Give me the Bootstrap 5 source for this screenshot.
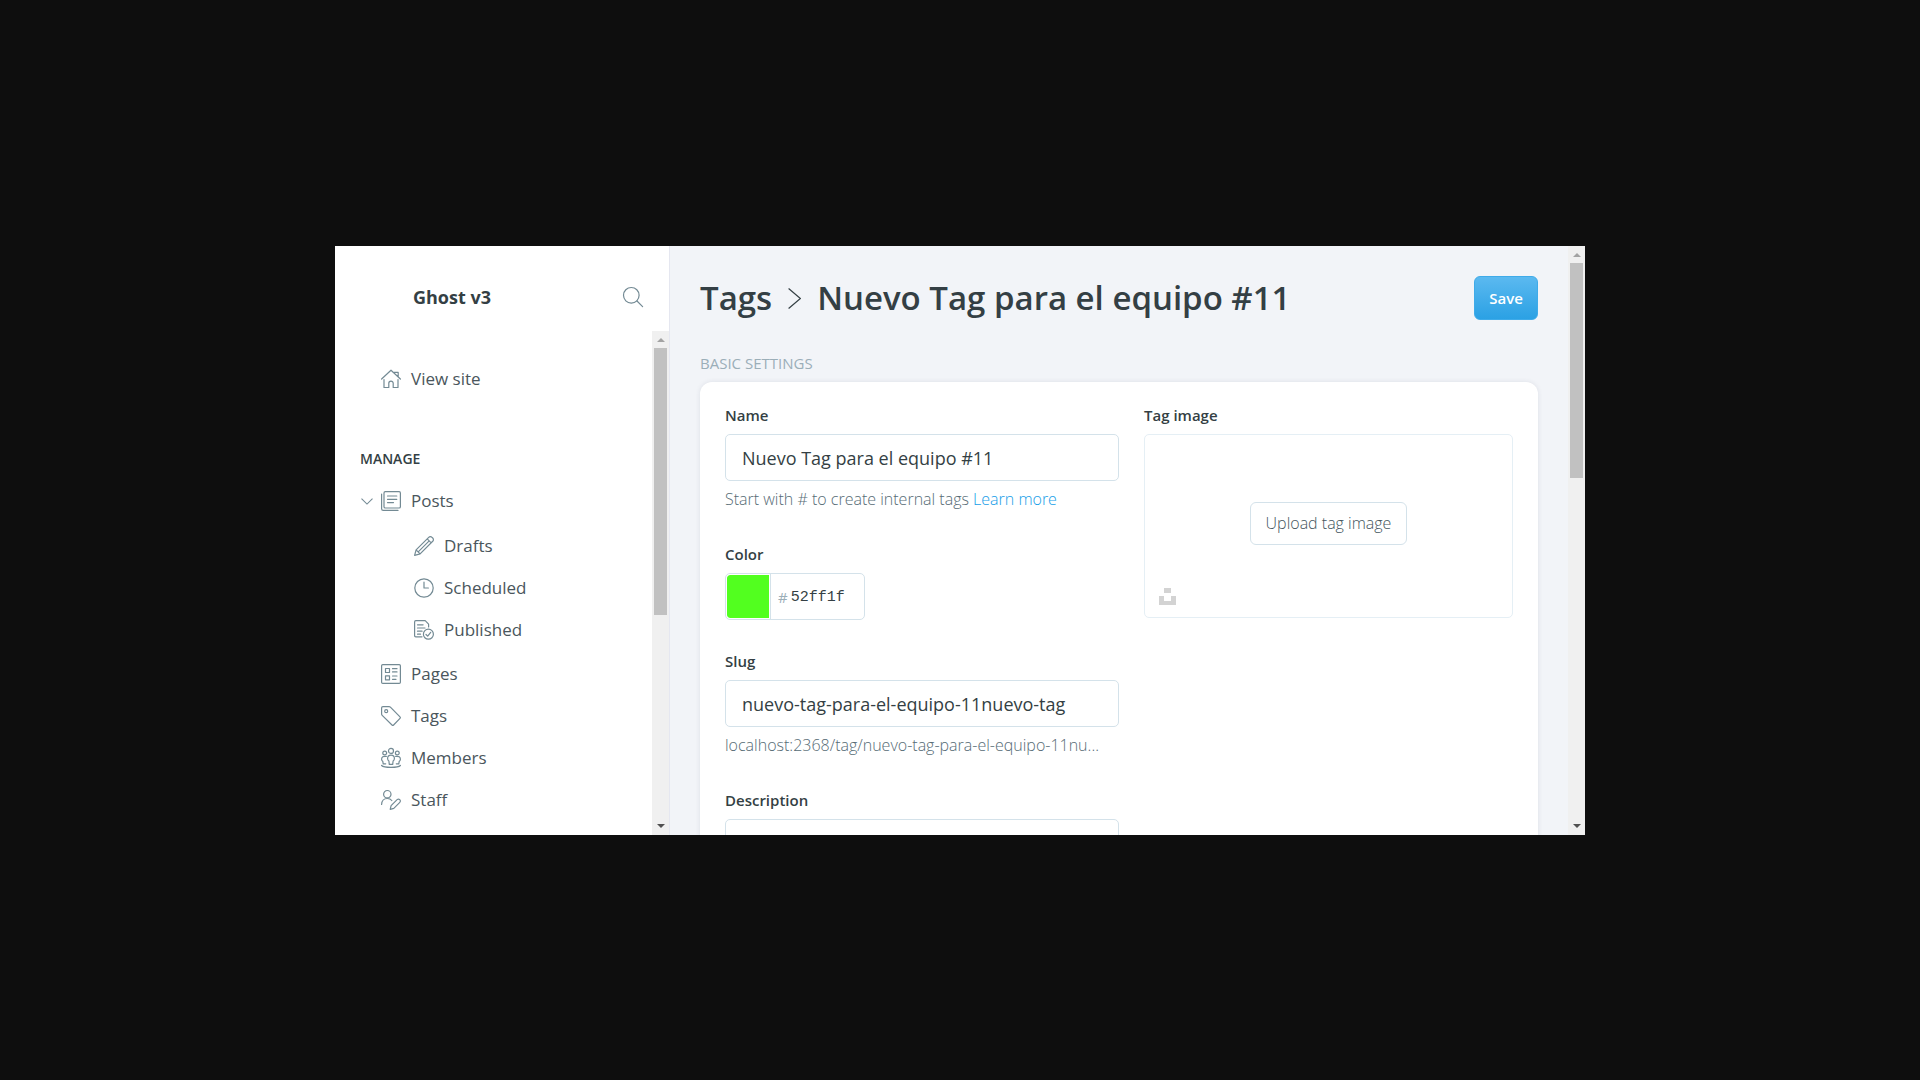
<!DOCTYPE html>
<html lang="en">
<head>
<meta charset="utf-8">
<meta name="viewport" content="width=device-width, initial-scale=1">
<title>Tags - Ghost v3</title>
<link href="https://cdn.jsdelivr.net/npm/bootstrap@5.3.0/dist/css/bootstrap.min.css" rel="stylesheet">
<style>
  :root { --ink: #343f44; --slate: #738a94; --mist: #9baeb8; --line: #d4e2ea; }
  body { height: 100vh; padding: 246px 16px 245px; background: #0e0e0e; color: var(--ink); font-family: "Open Sans", "Noto Sans", sans-serif; font-size: 15px; line-height: 20px; }
  .app-frame { max-width: 1250px; background: #fff; }
  .side-panel { width: 335px; border-right: 1px solid #e5e7f0; }
  .side-head { height: 85px; padding: 16px 26px 0 78px; }
  .site-name { font-size: 18px; font-weight: 700; }
  .side-nav { padding-top: 27px; }
  .side-nav a { display: flex; align-items: center; gap: 10px; height: 42px; padding-left: 46px; font-size: 17px; color: #4a565c; text-decoration: none; }
  .side-nav .sub-links { padding: 3px 0 2px; }
  .side-nav .sub-links a { padding-left: 79px; }
  .side-title { margin: 49px 0 11px 25px; font-size: 14px; line-height: 20px; font-weight: 600; }
  .fold-btn { left: 26px; top: 0; height: 42px; width: 12px; }
  .line-icon { width: 20px; height: 20px; fill: none; stroke: var(--slate); stroke-width: 1.2; stroke-linecap: round; stroke-linejoin: round; flex: none; overflow: visible; }
  .scroll-track { width: 17px; background: #f0f0f0; padding: 7px 0; flex: none; }
  .scroll-track .arrow-up { border: 4px solid transparent; border-top: 0; border-bottom-color: #a3a3a3; }
  .scroll-track .arrow-down { border: 4px solid transparent; border-bottom: 0; border-top-color: #505050; }
  .scroll-thumb { width: 13px; margin-top: 6px; background: #c1c1c1; }
  .main-pane { background: #f2f4f8; }
  .main-body { padding: 30px 30px 0; }
  .page-title { font-size: 33px; line-height: 44px; font-weight: 600; gap: 16px; }
  .page-title a { color: inherit; text-decoration: none; }
  .btn-save { --bs-btn-color: #fff; --bs-btn-hover-color: #fff; --bs-btn-active-color: #fff; width: 64px; height: 44px; padding: 0; border: 1px solid #3fabe9; border-radius: 6px; background: linear-gradient(#5bb9f0, #2ba1e4); font-size: 15px; font-weight: 600; }
  .section-title { margin: 33px 0 9px; font-size: 15px; line-height: 20px; font-weight: 400; color: var(--mist); }
  .settings-card { padding: 23px 25px; gap: 25px; background: #fff; border-radius: 12px 12px 0 0; box-shadow: 0 0 5px rgba(40, 50, 80, .1); }
  .fields-col { flex: 394 1 0; }
  .image-col { flex: 369 1 0; }
  .field-group { margin-bottom: 31px; }
  .field-group label, .field-label { display: block; margin-bottom: 9px; font-weight: 600; }
  .text-box { height: 47px; padding: 0 16px; border: 1px solid var(--line); border-radius: 5px; font-size: 18px; color: var(--ink); }
  .field-hint { margin: 6px 0 0; padding-bottom: 2px; font-size: 16px; line-height: 24px; font-weight: 300; color: #566b75; }
  .field-hint a { color: #159de8; text-decoration: none; }
  .color-box { width: 140px; height: 47px; padding: 1px; border: 1px solid var(--line); border-radius: 5px; }
  .color-box input[type=color] { width: 42px; height: 43px; padding: 0; border: 0; border-radius: 3px 0 0 3px; appearance: none; background: none; flex: none; }
  .color-box input[type=color]::-webkit-color-swatch-wrapper { padding: 0; }
  .color-box input[type=color]::-webkit-color-swatch { border: 0; border-radius: 3px 0 0 3px; }
  .color-split { width: 1px; margin: -1px 7px -1px 1px; background: var(--line); }
  .color-box .hex-box { width: 70px; padding: 2px 0 0; margin-left: 3px; border: 0; background: none; color: var(--ink); font: 15px "Liberation Mono", monospace; }
  .hash-sign { color: var(--mist); }
  .image-drop { height: 184px; padding-bottom: 5px; border: 1px solid #e5eff5; border-radius: 5px; }
  .btn-upload { height: 43px; width: 157px; padding: 0 0 2px; border: 1px solid var(--line); border-radius: 6px; background: #fff; color: #45565e; font-size: 16px; font-weight: 300; }
  .stock-btn { left: 14px; bottom: 12px; }
</style>
<script src="https://cdn.jsdelivr.net/npm/bootstrap@5.3.0/dist/js/bootstrap.bundle.min.js"></script>
</head>
<body class="overflow-hidden">
<div class="app-frame d-flex mx-auto h-100 overflow-hidden">

  <aside class="side-panel d-flex flex-column flex-shrink-0">
    <header class="side-head d-flex align-items-center justify-content-between flex-shrink-0">
      <span class="site-name">Ghost v3</span>
      <button type="button" class="btn p-0 border-0 lh-1" aria-label="Search">
        <svg class="line-icon" viewBox="0 0 20 20"><circle cx="8.3" cy="8.3" r="7.8"/><path d="M14 14l5.6 5.6"/></svg>
      </button>
    </header>
    <div class="d-flex flex-fill overflow-hidden">
      <nav class="side-nav flex-fill">
        <a href="#site"><svg class="line-icon" viewBox="0 0 20 20"><path d="M.6 10L10 1.2 19.4 10M13.2 3.4h4v4M3 10.6v7.9h4.8v-4.2a2.2 2.2 0 0 1 4.4 0v4.2H17v-7.9"/></svg>View site</a>
        <h2 class="side-title">MANAGE</h2>
        <div class="position-relative">
          <button type="button" class="fold-btn btn p-0 border-0 position-absolute d-flex align-items-center" aria-label="Collapse posts">
            <svg width="12" height="7" viewBox="0 0 12 7" fill="none" stroke="#738a94" stroke-width="1.1"><path d="M.5.7L6 6.1 11.5.7"/></svg>
          </button>
          <a href="#posts"><svg class="line-icon" viewBox="0 0 20 20"><rect x="3" y=".6" width="16.4" height="16.4" rx="1.3"/><path d="M.6 3v14.800q0 1.600 1.600 1.600h14.800M6.500 5h9.300M6.500 8.300h9.300M6.500 11.600h6"/></svg>Posts</a>
        </div>
        <div class="sub-links">
          <a href="#drafts"><svg class="line-icon" viewBox="0 0 20 20"><path d="M.6 19.400l1.500-5.500L14.700 1.300a2.300 2.300 0 0 1 3.300 0l.7.7a2.300 2.300 0 0 1 0 3.300L6.100 17.900zM2.100 13.900l4 4M13.200 2.800l4 4M4.200 15.800L15.200 4.800"/></svg>Drafts</a>
          <a href="#scheduled"><svg class="line-icon" viewBox="0 0 20 20"><circle cx="10" cy="10" r="9.200"/><path d="M10 4.200V10h4.400"/></svg>Scheduled</a>
          <a href="#published"><svg class="line-icon" viewBox="0 0 20 20"><path d="M8 16.800H1.800Q.6 16.800.6 15.600V1.900Q.6.700 1.800.700H11.200L14.600 4.100V6.900M3.500 4.800h5.600M3.500 8h7.500M3.500 11.200h4.600M3.500 14.200h3"/><circle cx="14.400" cy="14.200" r="5"/><path d="M12 14.500l1.700 1.700 3-3.900"/></svg>Published</a>
        </div>
        <a href="#pages"><svg class="line-icon" viewBox="0 0 20 20"><rect x=".6" y=".6" width="18.800" height="18.800" rx="1.200"/><path d="M4.500 4.500h4v4h-4zM4.500 11.800h4v4h-4zM11.500 4.700h4.500M11.500 7.900h4.500M11.500 12h4.500M11.500 15.300h3.500"/></svg>Pages</a>
        <a href="#tags"><svg class="line-icon" viewBox="0 0 20 20"><path d="M.6 1.900Q.6.600 1.900.600H8q.8 0 1.400.6L19 10.800q.8.8 0 1.600l-6.400 6.600q-.8.800-1.600 0L1.200 9.400Q.6 8.800.6 8z"/><circle cx="5.200" cy="5.200" r="1.500"/></svg>Tags</a>
        <a href="#members"><svg class="line-icon" viewBox="0 0 20 20"><circle cx="10" cy="2.900" r="2.500"/><circle cx="3.700" cy="5" r="1.900"/><circle cx="16.300" cy="5" r="1.900"/><path d="M8.300 16.400l-.4-3.400q-1.300-.7-1.300-2.500 0-3.300 3.400-3.300t3.400 3.300q0 1.800-1.300 2.500l-.4 3.400zM5.300 8.400Q.6 7.800.6 11.300q0 1.500 1.200 2.100l.4 2.400h2.500M14.700 8.400q4.700-.6 4.700 2.900 0 1.500-1.200 2.100l-.4 2.400h-2.500M.6 17.500Q2.500 19.400 10 19.400t9.400-1.900"/></svg>Members</a>
        <a href="#staff"><svg class="line-icon" viewBox="0 0 20 20"><circle cx="6.300" cy="4.200" r="3.700"/><path d="M.6 14.500Q.9 8.500 6.300 8.500q3 0 4.500 2M9.200 19.400l.9-3.700 6-6a1.900 1.900 0 0 1 2.700 2.700l-6 6z"/></svg>Staff</a>
      </nav>
      <div class="scroll-track d-flex flex-column align-items-center" aria-hidden="true">
        <span class="arrow-up"></span><span class="scroll-thumb" style="height:54.4%"></span><span class="arrow-down mt-auto"></span>
      </div>
    </div>
  </aside>

  <main class="main-pane d-flex flex-fill overflow-hidden">
    <div class="main-body flex-fill">
      <div class="d-flex justify-content-between align-items-center">
        <h1 class="page-title d-flex align-items-center m-0">
          <a href="#tags">Tags</a>
          <svg width="13" height="22" viewBox="0 0 13 22" fill="none" stroke="#343f44" stroke-width="1.200" aria-hidden="true"><path d="M.6 1.500L12.400 11.500 .6 21.500"/></svg>
          <span>Nuevo Tag para el equipo #11</span>
        </h1>
        <button type="button" class="btn btn-save">Save</button>
      </div>
      <h2 class="section-title">BASIC SETTINGS</h2>
      <form class="settings-card d-flex">
        <div class="fields-col">
          <div class="field-group">
            <label for="tag-name">Name</label>
            <input id="tag-name" class="form-control text-box" type="text" value="Nuevo Tag para el equipo #11">
            <p class="field-hint">Start with # to create internal tags <a href="#learn">Learn more</a></p>
          </div>
          <div class="field-group">
            <label for="tag-hex">Color</label>
            <div class="color-box d-flex align-items-stretch">
              <input type="color" value="#52ff1f" aria-label="Pick a color">
              <span class="color-split"></span>
              <span class="hash-sign align-self-center">#</span>
              <input id="tag-hex" class="hex-box" type="text" value="52ff1f">
            </div>
          </div>
          <div class="field-group">
            <label for="tag-slug">Slug</label>
            <input id="tag-slug" class="form-control text-box" type="text" value="nuevo-tag-para-el-equipo-11nuevo-tag">
            <p class="field-hint text-nowrap">localhost:2368/tag/nuevo-tag-para-el-equipo-11nu...</p>
          </div>
          <div class="field-group">
            <label for="tag-desc">Description</label>
            <textarea id="tag-desc" class="form-control text-box" rows="3"></textarea>
          </div>
        </div>
        <div class="image-col">
          <span class="field-label">Tag image</span>
          <div class="image-drop position-relative d-flex align-items-center justify-content-center">
            <button type="button" class="btn btn-upload">Upload tag image</button>
            <button type="button" class="stock-btn btn p-0 border-0 lh-1 position-absolute" aria-label="Choose from Unsplash">
              <svg class="d-block" width="17" height="17" viewBox="0 0 17 17" fill="#d3d3d3"><path d="M5 0h7v5H5zM0 8h5v5h7V8h5v9H0z"/></svg>
            </button>
          </div>
        </div>
      </form>
    </div>
    <div class="scroll-track d-flex flex-column align-items-center" aria-hidden="true">
      <span class="arrow-up"></span><span class="scroll-thumb" style="height:37.4%"></span><span class="arrow-down mt-auto"></span>
    </div>
  </main>
</div>
</body>
</html>
